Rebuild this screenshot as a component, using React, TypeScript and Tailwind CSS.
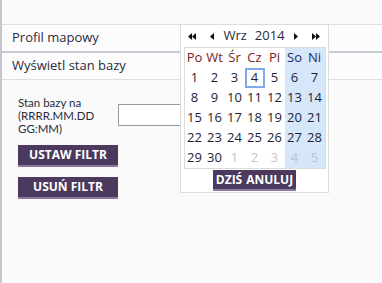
import React from "react";

const font = { fontFamily: '"Open Sans", "Noto Sans", sans-serif' };

function Tri({ dir }: { dir: "l" | "r" }) {
  return (
    <svg width="4" height="7" viewBox="0 0 4 7" className="block">
      {dir === "l" ? <path d="M4 0 L0 3.5 L4 7 Z" fill="#111" /> : <path d="M0 0 L4 3.5 L0 7 Z" fill="#111" />}
    </svg>
  );
}

const weeks: { d: number; other?: boolean }[][] = [
  [1, 2, 3, 4, 5, 6, 7].map((d) => ({ d })),
  [8, 9, 10, 11, 12, 13, 14].map((d) => ({ d })),
  [15, 16, 17, 18, 19, 20, 21].map((d) => ({ d })),
  [22, 23, 24, 25, 26, 27, 28].map((d) => ({ d })),
  [
    { d: 29 },
    { d: 30 },
    { d: 1, other: true },
    { d: 2, other: true },
    { d: 3, other: true },
    { d: 4, other: true },
    { d: 5, other: true },
  ],
];

const names = ["Po", "Wt", "Śr", "Cz", "Pi", "So", "Ni"];

function Calendar() {
  return (
    <div className="absolute left-[178px] top-[24px] w-[149px] h-[169px] bg-white border border-[#dcdcdc] flex flex-col items-center">
      <div className="h-[22px] w-full flex items-center text-[13px] text-[#222]">
        <div className="flex ml-[7px] gap-0"><Tri dir="l" /><Tri dir="l" /></div>
        <div className="ml-[14px]"><Tri dir="l" /></div>
        <div className="flex-1 flex justify-center gap-[8px] text-[#2a2a3a]">
          <span>Wrz</span>
          <span>2014</span>
        </div>
        <div className="mr-[14px]"><Tri dir="r" /></div>
        <div className="flex mr-[8px]"><Tri dir="r" /><Tri dir="r" /></div>
      </div>
      <div className="border border-[#dcdcdc] w-[142px] text-[13px]">
        <div className="flex h-[20px]">
          {names.map((n, i) => (
            <div
              key={n}
              className={
                "w-[20px] flex items-center justify-center " +
                (i >= 5 ? "bg-[#d6e6fb] text-[#1c2a6e]" : "text-[#7a1c1c]")
              }
            >
              {n}
            </div>
          ))}
        </div>
        {weeks.map((w, wi) => (
          <div key={wi} className="flex h-[20px]">
            {w.map((c, i) => (
              <div
                key={i}
                className={
                  "w-[20px] flex items-center justify-center " +
                  (i >= 5 ? "bg-[#d6e6fb] " : "") +
                  (c.other ? "text-[#c4c4c4] " : "text-[#1e1e35] ") +
                  (wi === 0 && c.d === 4 ? "border-2 border-[#7fa9e8]" : "")
                }
              >
                {c.d}
              </div>
            ))}
          </div>
        ))}
      </div>
      <div className="mt-[1px] flex bg-[#4b3a5e] border-b-2 border-[#8c7aa0] h-[21px] items-center px-[3px] text-white font-bold text-[12px]">
        <span>DZIŚ</span>
        <span className="ml-[4px]">ANULUJ</span>
      </div>
    </div>
  );
}

export default function App() {
  return (
    <div style={font} className="relative w-[382px] h-[283px] bg-[#fafafa] border-l-2 border-[#c5c7cc] overflow-hidden">
      <div className="h-[24px]" />
      <div className="h-[27px] border-t border-[#dedede] bg-[#fcfcfc] flex items-center pl-[10px] text-[13px] text-[#2b2b3d]">
        Profil mapowy
      </div>
      <div className="h-[28px] border-t-2 border-[#c8ccd4] bg-[#fcfcfc] flex items-center pl-[10px] text-[13px] text-[#2b2b3d]">
        Wyświetl stan bazy
      </div>
      <div className="border-t border-[#dedede] pl-[16px] pt-[16px]">
        <div className="flex">
          <div className="w-[100px] font-['Lato',sans-serif] text-[11.5px] leading-[13px] text-[#2b2b3d]">
            <div>Stan bazy na</div>
            <div>(RRRR.MM.DD</div>
            <div>GG:MM)</div>
          </div>
          <div className="mt-[8px] w-[150px] h-[22px] bg-white border border-[#999]" />
        </div>
        <div className="mt-[10px] w-[100px] h-[22px] bg-[#4b3a5e] border-b-2 border-[#8c7aa0] flex items-center justify-center text-white font-bold text-[12px]">
          USTAW FILTR
        </div>
        <div className="mt-[10px] w-[100px] h-[22px] bg-[#4b3a5e] border-b-2 border-[#8c7aa0] flex items-center justify-center text-white font-bold text-[12px]">
          USUŃ FILTR
        </div>
      </div>
      <Calendar />
    </div>
  );
}
